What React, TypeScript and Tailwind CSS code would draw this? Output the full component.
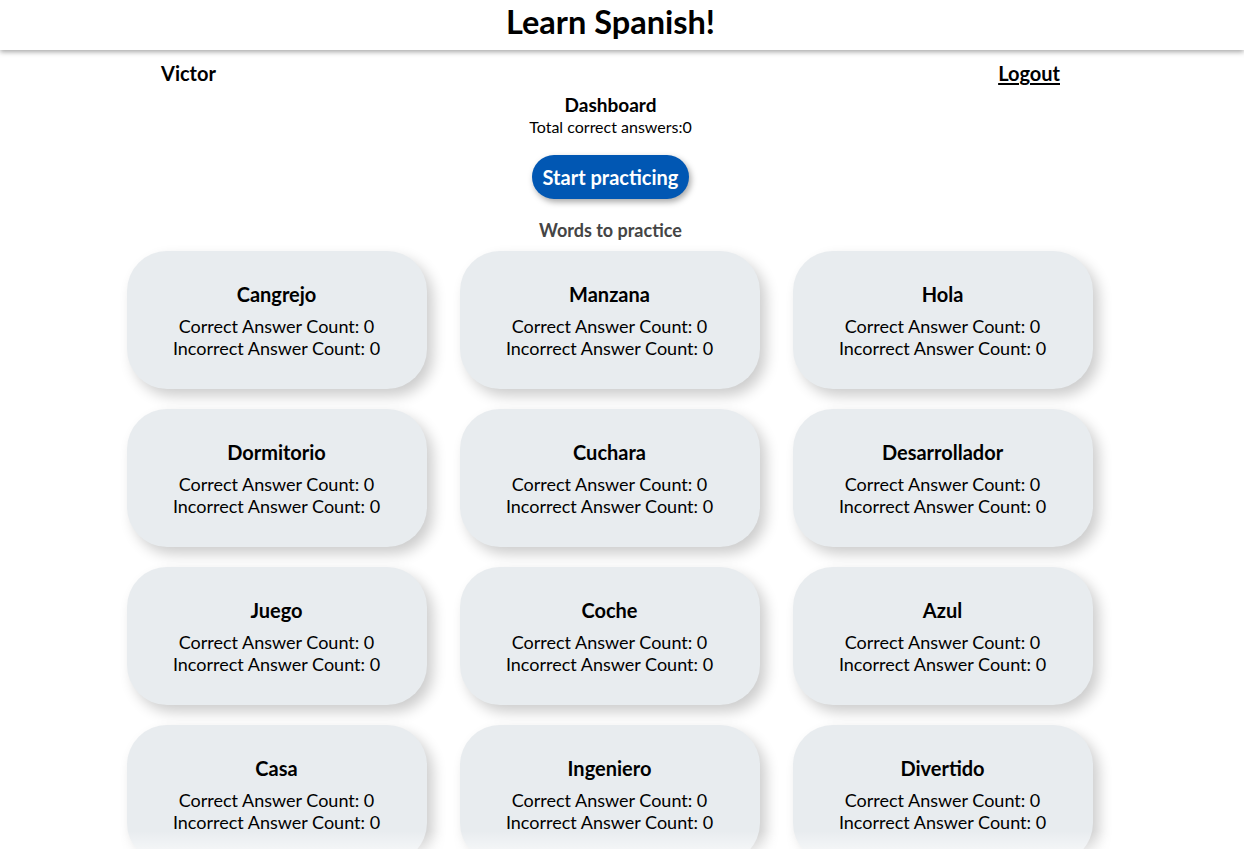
import React from 'react';

const words = [
  'Cangrejo',
  'Manzana',
  'Hola',
  'Dormitorio',
  'Cuchara',
  'Desarrollador',
  'Juego',
  'Coche',
  'Azul',
  'Casa',
  'Ingeniero',
  'Divertido',
];

function WordCard({ word }: { word: string }) {
  return (
    <div className="h-[138px] w-[300px] rounded-[40px] bg-[#e8ecef] shadow-[6px_7px_14px_rgba(0,0,0,0.2)] flex flex-col items-center justify-center text-black">
      <h3 className="text-[20px] leading-[24px] font-bold mb-[9px]">{word}</h3>
      <p className="text-[18px] leading-[22px]">Correct Answer Count: 0</p>
      <p className="text-[18px] leading-[22px]">Incorrect Answer Count: 0</p>
    </div>
  );
}

export default function App() {
  return (
    <div className="relative h-[849px] overflow-hidden bg-white font-['Lato',sans-serif] text-black">
      {/* Header */}
      <header className="relative z-10 h-[50px] bg-white shadow-[0_2px_5px_rgba(0,0,0,0.35)] flex items-center justify-center pr-[23px]">
        <h1 className="text-[32.5px] leading-[40px] font-bold pb-[6px]">Learn Spanish!</h1>
      </header>

      <main className="pr-[23px]">
        <div className="mx-auto mt-[10px] flex w-[899px] justify-between text-[20px] leading-[26px] font-bold">
          <span>Victor</span>
          <a href="#" className="underline underline-offset-2">Logout</a>
        </div>

        <div className="flex flex-col items-center">
          <h2 className="mt-[7px] text-[19px] leading-[24px] font-bold">Dashboard</h2>
          <p className="text-[16px] leading-[19px]">Total correct answers:0</p>

          <button className="mt-[19px] h-[44px] w-[157px] rounded-full bg-[#0157b3] text-white text-[20px] font-bold shadow-[2px_3px_6px_rgba(0,0,0,0.35)]">
            Start practicing
          </button>

          <h3 className="mt-[20px] text-[18px] leading-[22px] font-bold text-[#454545]">Words to practice</h3>

          <div className="mt-[10px] mr-[2px] grid grid-cols-[300px_300px_300px] gap-x-[33px] gap-y-[20px]">
            {words.map((w) => (
              <WordCard key={w} word={w} />
            ))}
          </div>
        </div>
      </main>

      <div className="pointer-events-none absolute bottom-0 left-0 right-0 h-[18px] bg-gradient-to-b from-white/0 to-white/50" />
    </div>
  );
}
